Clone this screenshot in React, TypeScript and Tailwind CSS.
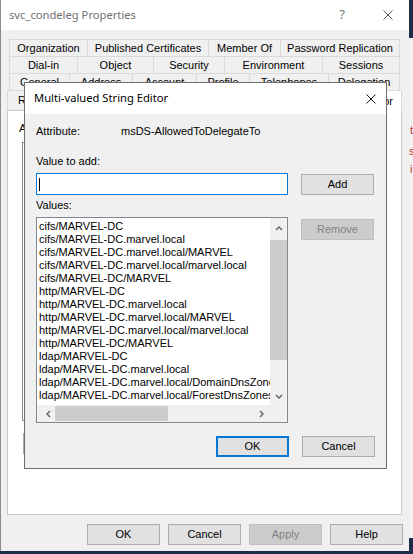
import React from "react";

type Tab = { label: string; w: string };

const row1: Tab[] = [
  { label: "Organization", w: "w-[78px]" },
  { label: "Published Certificates", w: "w-[121px]" },
  { label: "Member Of", w: "w-[72px]" },
  { label: "Password Replication", w: "w-[120px]" },
];

const row2: Tab[] = [
  { label: "Dial-in", w: "w-[68px]" },
  { label: "Object", w: "w-[76px]" },
  { label: "Security", w: "w-[71px]" },
  { label: "Environment", w: "w-[98px]" },
  { label: "Sessions", w: "w-[78px]" },
];

const row3: Tab[] = [
  { label: "General", w: "w-[60px]" },
  { label: "Address", w: "w-[63px]" },
  { label: "Account", w: "w-[64px]" },
  { label: "Profile", w: "w-[53px]" },
  { label: "Telephones", w: "w-[79px]" },
  { label: "Delegation", w: "w-[72px]" },
];

const values = [
  "cifs/MARVEL-DC",
  "cifs/MARVEL-DC.marvel.local",
  "cifs/MARVEL-DC.marvel.local/MARVEL",
  "cifs/MARVEL-DC.marvel.local/marvel.local",
  "cifs/MARVEL-DC/MARVEL",
  "http/MARVEL-DC",
  "http/MARVEL-DC.marvel.local",
  "http/MARVEL-DC.marvel.local/MARVEL",
  "http/MARVEL-DC.marvel.local/marvel.local",
  "http/MARVEL-DC/MARVEL",
  "ldap/MARVEL-DC",
  "ldap/MARVEL-DC.marvel.local",
  "ldap/MARVEL-DC.marvel.local/DomainDnsZones.marvel.local",
  "ldap/MARVEL-DC.marvel.local/ForestDnsZones.marvel.local",
];

function TabRow({ tabs }: { tabs: Tab[] }) {
  return (
    <div className="flex ml-[2px]">
      {tabs.map((t, i) => (
        <div
          key={t.label}
          className={`${t.w} h-[17px] flex items-center justify-center border-t border-l border-[#d9d9d9] whitespace-nowrap ${
            i === tabs.length - 1 ? "border-r" : ""
          }`}
        >
          {t.label}
        </div>
      ))}
    </div>
  );
}

function Button({
  label,
  variant = "normal",
}: {
  label: string;
  variant?: "normal" | "disabled" | "default";
}) {
  const look =
    variant === "disabled"
      ? "bg-[#cccccc] border border-[#bfbfbf] text-[#838383]"
      : variant === "default"
      ? "bg-[#e1e1e1] border-2 border-[#0078d7]"
      : "bg-[#e1e1e1] border border-[#adadad]";
  return (
    <div
      className={`w-[73px] h-[21px] flex items-center justify-center shrink-0 ${look}`}
    >
      {label}
    </div>
  );
}

function Chevron({ dir }: { dir: "up" | "down" | "left" | "right" }) {
  const pts = {
    up: "1,5 4,2 7,5",
    down: "1,2 4,5 7,2",
    left: "5,1 2,4 5,7",
    right: "2,1 5,4 2,7",
  }[dir];
  return (
    <svg width="8" height="8" viewBox="0 0 8 8">
      <polyline points={pts} fill="none" stroke="#606060" strokeWidth="1.4" />
    </svg>
  );
}

function CloseX({ color, size }: { color: string; size: number }) {
  return (
    <svg width={size} height={size} viewBox="0 0 10 10">
      <path d="M0.5 0.5 L9.5 9.5 M9.5 0.5 L0.5 9.5" stroke={color} strokeWidth="1" />
    </svg>
  );
}

function StringEditor() {
  return (
    <div className="absolute z-20 left-[24px] top-[82px] w-[363px] h-[387px] border border-[#6e6e6e] bg-[#f0f0f0] flex flex-col">
      <div className="h-[31px] bg-white flex items-center justify-between pl-[9px] pr-[10px]">
        <span className="font-['Noto_Sans',sans-serif] text-[11.2px] text-black">
          Multi-valued String Editor
        </span>
        <CloseX color="#1a1a1a" size={10} />
      </div>

      <div className="flex flex-col pl-[11px] pt-[11px]">
        <div className="flex leading-[13px]">
          <span className="w-[85px]">Attribute:</span>
          <span>msDS-AllowedToDelegateTo</span>
        </div>

        <div className="mt-[17px] leading-[13px]">Value to add:</div>
        <div className="mt-[5px] flex items-start gap-[13px]">
          <div className="w-[252px] h-[22px] border border-[#0078d7] bg-white flex items-center pl-[2px]">
            <div className="w-[1px] h-[13px] bg-black" />
          </div>
          <div className="mt-[1px]">
            <Button label="Add" />
          </div>
        </div>

        <div className="mt-[4px] leading-[13px]">Values:</div>
        <div className="mt-[5px] flex items-start gap-[13px]">
          <div className="w-[252px] h-[206px] border border-[#828790] bg-white flex flex-col">
            <div className="flex h-[187px]">
              <div className="w-[233px] overflow-hidden pl-[2px] pt-[2px]">
                {values.map((v) => (
                  <div key={v} className="leading-[13px] whitespace-nowrap">
                    {v}
                  </div>
                ))}
              </div>
              <div className="w-[17px] bg-[#f0f0f0] flex flex-col">
                <div className="h-[17px] flex items-center justify-center mt-[2px]">
                  <Chevron dir="up" />
                </div>
                <div className="mt-[3px] h-[120px] bg-[#cdcdcd]" />
                <div className="mt-auto h-[17px] flex items-center justify-center">
                  <Chevron dir="down" />
                </div>
              </div>
            </div>
            <div className="flex h-[17px]">
              <div className="w-[233px] bg-[#f0f0f0] flex items-center">
                <div className="w-[17px] flex items-center justify-center ml-[3px]">
                  <Chevron dir="left" />
                </div>
                <div className="w-[113px] h-[15px] bg-[#cdcdcd] ml-[-2px]" />
                <div className="ml-auto w-[17px] flex items-center justify-center">
                  <Chevron dir="right" />
                </div>
              </div>
              <div className="w-[17px] bg-[#f0f0f0]" />
            </div>
          </div>
          <div className="mt-[2px]">
            <Button label="Remove" variant="disabled" />
          </div>
        </div>

        <div className="mt-[13px] flex justify-end gap-[13px] pr-[11px]">
          <Button label="OK" variant="default" />
          <Button label="Cancel" />
        </div>
      </div>
    </div>
  );
}

export default function App() {
  return (
    <div className="relative w-[413px] h-[554px] overflow-hidden bg-[#1f2c47] font-['Liberation_Sans',Arial,sans-serif] text-[11px] text-black">
      {/* window behind, on the right */}
      <div className="absolute left-[409px] top-[38px] w-[4px] h-[500px] bg-[#f3f3f3] text-[#c0392b] font-['Liberation_Sans',sans-serif] text-[11px]">
        <div className="absolute left-[1px] top-[84px]">t</div>
        <div className="absolute left-[0px] top-[105px]">s</div>
        <div className="absolute left-[1px] top-[123px]">i</div>
      </div>

      <div className="absolute left-0 top-0 w-[409px] h-[551px] bg-[#f0f0f0] border-l border-[#8c8c8c] flex flex-col">
        <div className="h-[30px] bg-white flex items-center pl-[8px] pr-[16px] shrink-0">
          <span className="font-['Noto_Sans',sans-serif] text-[11.2px] text-[#707070]">
            svc_condeleg Properties
          </span>
          <span className="ml-auto mr-[38px] font-['Noto_Sans',sans-serif] text-[13px] text-[#777777]">
            ?
          </span>
          <CloseX color="#555555" size={10} />
        </div>

        <div className="pt-[9px] pl-[6px] flex flex-col">
          <TabRow tabs={row1} />
          <TabRow tabs={row2} />
          <TabRow tabs={row3} />
          <div className="flex items-end h-[20px]">
            <div className="w-[85px] h-[20px] border-t border-l border-[#d9d9d9] flex items-center pl-[10px] whitespace-nowrap">
              Remote control
            </div>
            <div className="w-[170px] h-[20px] border-t border-l border-[#d9d9d9] flex items-center justify-center whitespace-nowrap">
              Remote Desktop Services Profile
            </div>
            <div className="w-[45px] h-[20px] border-t border-l border-[#d9d9d9] flex items-center justify-center">
              COM+
            </div>
            <div className="relative z-10 w-[95px] h-[21px] -mb-[1px] bg-white border-t border-l border-r border-[#d9d9d9] flex items-center justify-end pr-[8px] whitespace-nowrap">
              Attribute Editor
            </div>
          </div>

          <div className="w-[395px] h-[405px] bg-white border border-[#c8c8c8] flex flex-col pl-[11px] pt-[11px]">
            <div className="leading-[13px]">Attributes:</div>
            <div className="ml-[3px] mt-[7px] w-[360px] h-[279px] border border-[#828790]" />
            <div className="ml-[4px] mt-[12px] w-[73px] h-[21px] border border-[#adadad] bg-[#e1e1e1]" />
          </div>
        </div>

        <div className="mt-[9px] flex justify-end gap-[8px] pr-[6px]">
          <Button label="OK" />
          <Button label="Cancel" />
          <Button label="Apply" variant="disabled" />
          <Button label="Help" />
        </div>
      </div>

      <StringEditor />
    </div>
  );
}
